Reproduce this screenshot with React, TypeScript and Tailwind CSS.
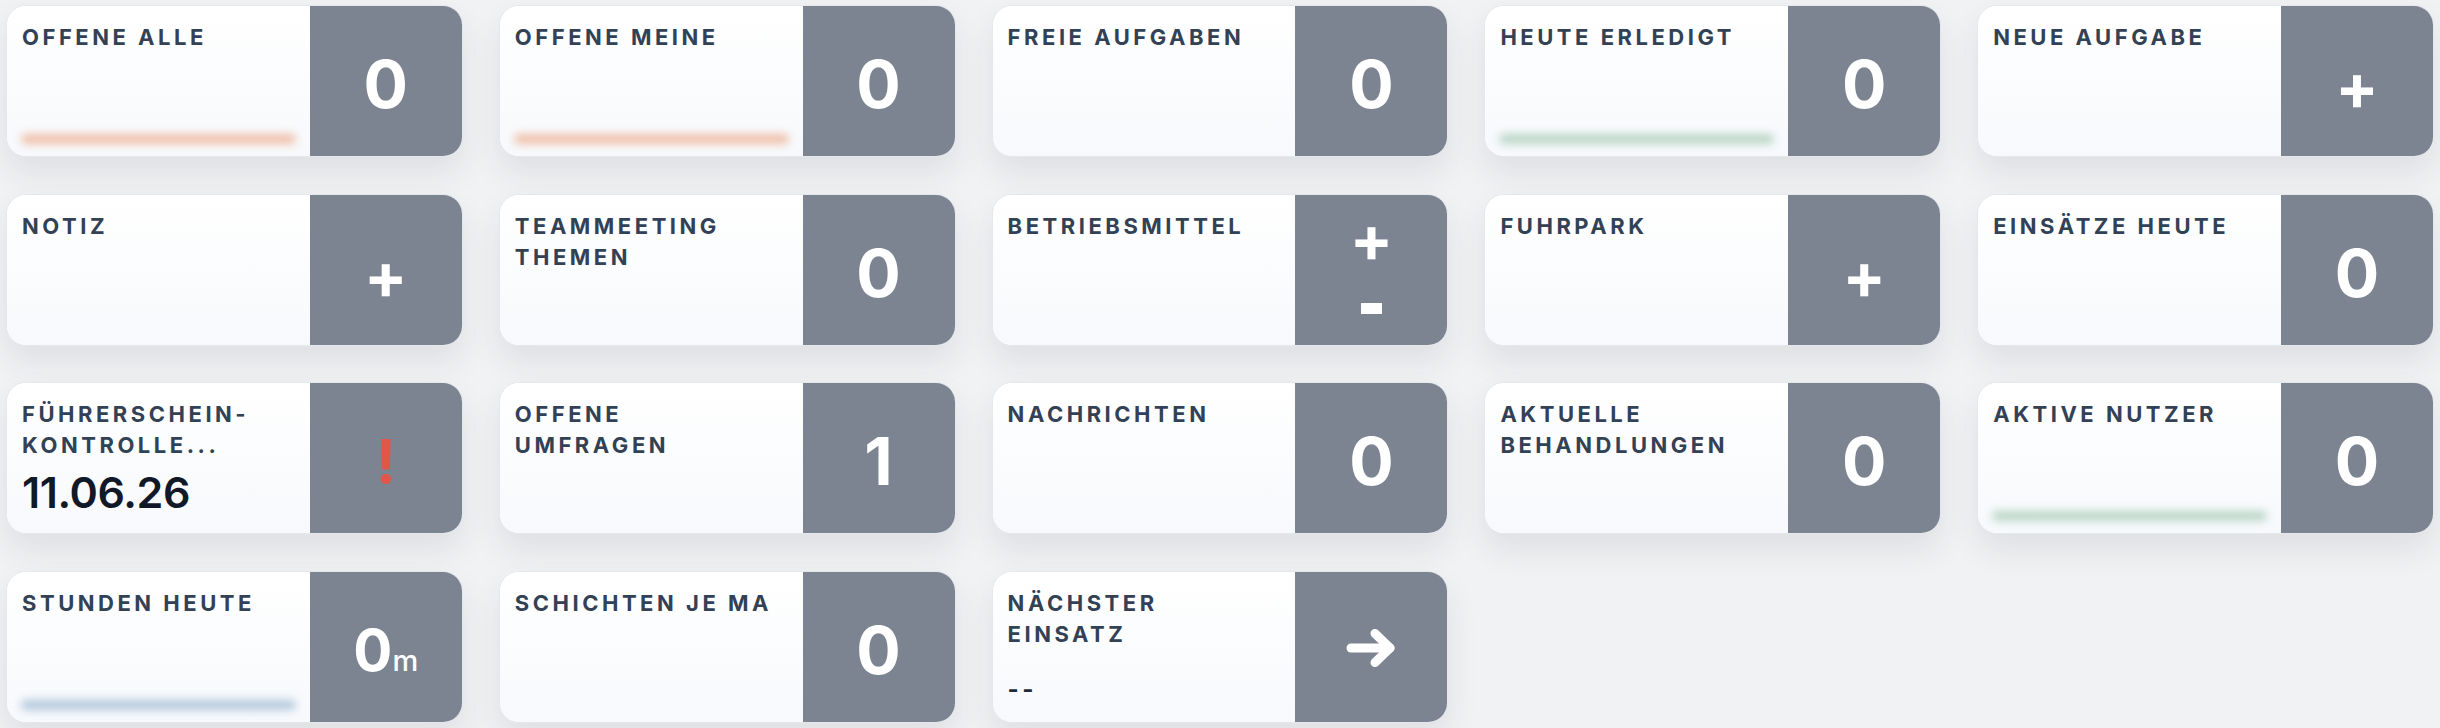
import React from "react";

type Accent = "orange" | "green" | "blue" | null;

type Tile = {
  title: string;
  kind: "num" | "plus" | "plusminus" | "alert" | "arrow" | "minutes";
  value?: string;
  accent?: Accent;
  detail?: string;
  detailKind?: "date" | "dash";
};

const tiles: Tile[] = [
  { title: "OFFENE ALLE", kind: "num", value: "0", accent: "orange" },
  { title: "OFFENE MEINE", kind: "num", value: "0", accent: "orange" },
  { title: "FREIE AUFGABEN", kind: "num", value: "0" },
  { title: "HEUTE ERLEDIGT", kind: "num", value: "0", accent: "green" },
  { title: "NEUE AUFGABE", kind: "plus" },
  { title: "NOTIZ", kind: "plus" },
  { title: "TEAMMEETING\nTHEMEN", kind: "num", value: "0" },
  { title: "BETRIEBSMITTEL", kind: "plusminus" },
  { title: "FUHRPARK", kind: "plus" },
  { title: "EINSÄTZE HEUTE", kind: "num", value: "0" },
  { title: "FÜHRERSCHEIN-\nKONTROLLE...", kind: "alert", detail: "11.06.26", detailKind: "date" },
  { title: "OFFENE\nUMFRAGEN", kind: "num", value: "1" },
  { title: "NACHRICHTEN", kind: "num", value: "0" },
  { title: "AKTUELLE\nBEHANDLUNGEN", kind: "num", value: "0" },
  { title: "AKTIVE NUTZER", kind: "num", value: "0", accent: "green" },
  { title: "STUNDEN HEUTE", kind: "minutes", value: "0", accent: "blue" },
  { title: "SCHICHTEN JE MA", kind: "num", value: "0" },
  { title: "NÄCHSTER\nEINSATZ", kind: "arrow", detail: "--", detailKind: "dash" },
];

function AccentBar({ accent }: { accent: Accent }) {
  if (accent === "orange")
    return <div className="mx-[14px] mb-[12px] h-[10px] shrink-0 rounded-full bg-[#efbfa8] blur-[4px]" />;
  if (accent === "green")
    return <div className="mx-[14px] mb-[12px] h-[10px] shrink-0 rounded-full bg-[#bad5c6] blur-[4px]" />;
  if (accent === "blue")
    return <div className="mx-[14px] mb-[12px] h-[10px] shrink-0 rounded-full bg-[#b2c8dc] blur-[4px]" />;
  return null;
}

function ArrowRight() {
  return (
    <svg width="50" height="40" viewBox="0 0 50 40" fill="none" stroke="white" strokeWidth="9" strokeLinecap="round" strokeLinejoin="round">
      <path d="M5 20H44" />
      <path d="M29 5.5L44 20L29 34.5" />
    </svg>
  );
}

function Action({ tile }: { tile: Tile }) {
  switch (tile.kind) {
    case "num":
      return <span className="pt-[6px] text-[66px] font-bold leading-none text-white">{tile.value}</span>;
    case "plus":
      return <span className="pt-[12px] text-[64px] font-bold leading-none text-white">+</span>;
    case "plusminus":
      return (
        <div className="flex flex-col items-center gap-[44px] pb-[6px]">
          <span className="flex h-[40px] items-center text-[64px] font-bold leading-[40px] text-white">+</span>
          {/* minus bar, same stroke weight as the plus */}
          <div className="h-[11px] w-[21px] bg-white" />
        </div>
      );
    case "alert":
      return <span className="pt-[5px] text-[60px] font-bold leading-none text-[#e0574a]">!</span>;
    case "arrow":
      return (
        <div className="pt-[2px]">
          <ArrowRight />
        </div>
      );
    case "minutes":
      return (
        <span className="flex items-baseline pt-[6px] text-white">
          <span className="text-[58px] font-bold leading-none">{tile.value}</span>
          <span className="text-[29px] font-medium leading-none">m</span>
        </span>
      );
  }
}

function Card({ tile }: { tile: Tile }) {
  return (
    <div className="flex h-[152px] overflow-hidden rounded-[20px] border border-[#e4e7ec] bg-white shadow-[0_16px_32px_rgba(30,41,59,0.09)]">
      <div className="flex min-w-0 flex-1 flex-col bg-linear-to-b from-white to-[#f7f9fc]">
        <div className="whitespace-pre-line pl-[15px] pr-[16px] pt-[16px] text-[22px] font-bold leading-[31px] tracking-[0.16em] text-[#334155]">
          {tile.title}
        </div>
        {tile.detailKind === "date" && (
          <div className="pl-[15px] pt-[10px] text-[43px] font-semibold leading-none tracking-[-0.01em] text-[#111827]">
            {tile.detail}
          </div>
        )}
        <div className="flex-1" />
        {tile.detailKind === "dash" && (
          <div className="pl-[15px] pb-[20px] text-[24px] font-bold leading-none tracking-[0.14em] text-[#1e293b]">
            {tile.detail}
          </div>
        )}
        <AccentBar accent={tile.accent ?? null} />
      </div>
      <div className="flex w-[152px] shrink-0 items-center justify-center bg-[#7c8491]">
        <Action tile={tile} />
      </div>
    </div>
  );
}

export default function App() {
  return (
    <div
      className="min-h-[728px] w-full bg-[#f1f2f4] px-[6px] pt-[5px] pb-[6px]"
      style={{ fontFamily: "Inter, 'Noto Sans', 'Liberation Sans', sans-serif" }}
    >
      <div className="grid grid-cols-5 gap-x-[36px] gap-y-[36.5px]">
        {tiles.map((t) => (
          <Card key={t.title} tile={t} />
        ))}
      </div>
    </div>
  );
}
